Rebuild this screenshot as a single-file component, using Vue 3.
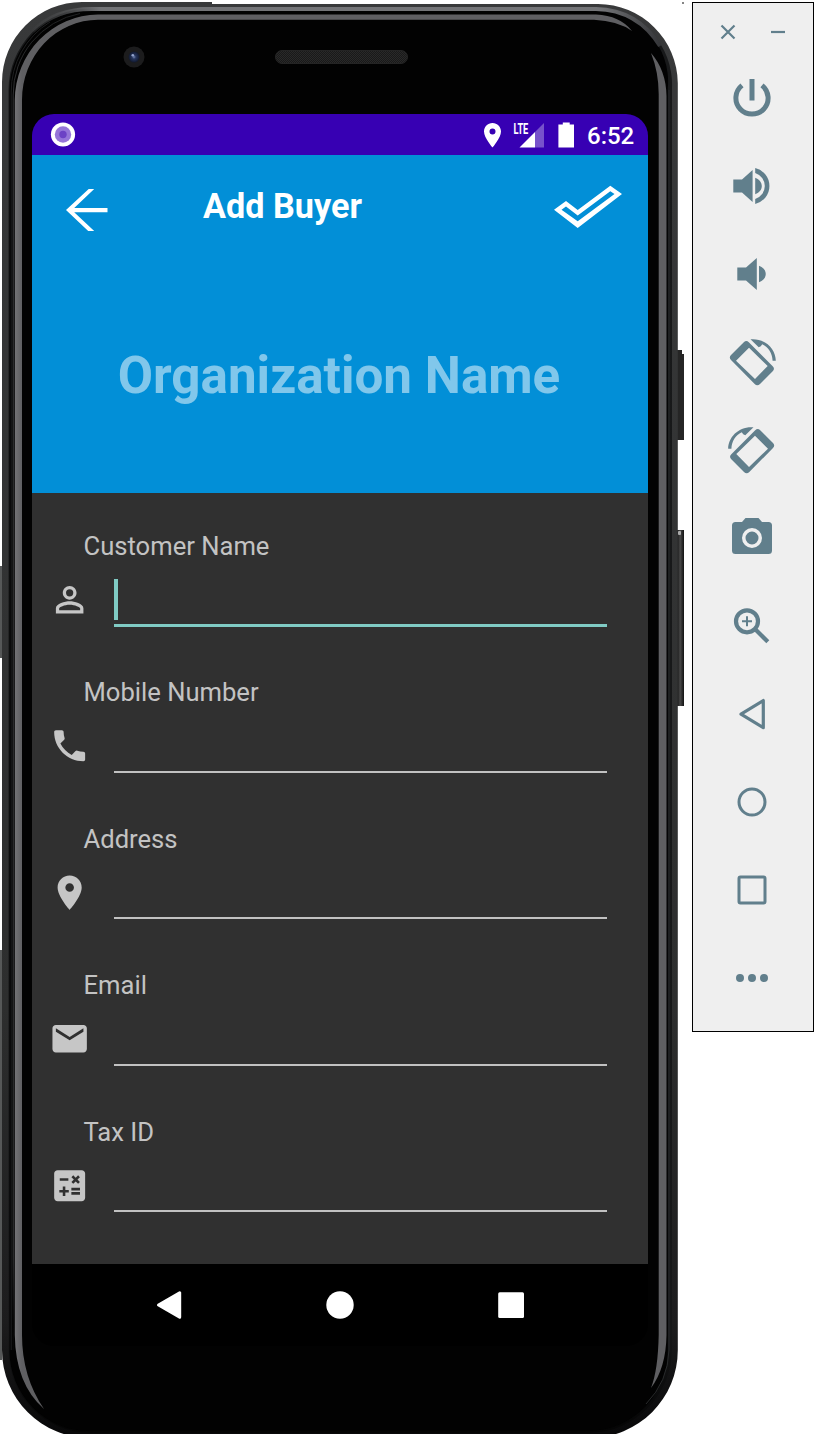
<script setup>
const fields = [
  { label: 'Customer Name', focused: true, icon: 'M12 5.9a2.1 2.1 0 1 1 0 4.2 2.1 2.1 0 0 1 0-4.2m0 9c2.97 0 6.1 1.46 6.1 2.1v1.1H5.9V17c0-.64 3.13-2.1 6.1-2.1M12 4C9.79 4 8 5.79 8 8s1.79 4 4 4 4-1.79 4-4-1.79-4-4-4zm0 9c-2.67 0-8 1.34-8 4v3h16v-3c0-2.66-5.33-4-8-4z' },
  { label: 'Mobile Number', icon: 'M6.62 10.79c1.44 2.83 3.76 5.14 6.59 6.59l2.2-2.2c.27-.27.67-.36 1.02-.24 1.12.37 2.33.57 3.57.57.55 0 1 .45 1 1V20c0 .55-.45 1-1 1-9.39 0-17-7.61-17-17 0-.55.45-1 1-1h3.5c.55 0 1 .45 1 1 0 1.25.2 2.45.57 3.57.11.35.03.74-.25 1.02l-2.2 2.2z' },
  { label: 'Address', icon: 'M12 2C8.13 2 5 5.13 5 9c0 5.25 7 13 7 13s7-7.75 7-13c0-3.87-3.13-7-7-7zm0 9.5a2.5 2.5 0 0 1 0-5 2.5 2.5 0 0 1 0 5z' },
  { label: 'Email', icon: 'M20 4H4c-1.1 0-1.99.9-1.99 2L2 18c0 1.1.9 2 2 2h16c1.1 0 2-.9 2-2V6c0-1.1-.9-2-2-2zm0 4l-8 5-8-5V6l8 5 8-5v2z' },
  { label: 'Tax ID', icon: 'M19 3H5c-1.1 0-2 .9-2 2v14c0 1.1.9 2 2 2h14c1.1 0 2-.9 2-2V5c0-1.1-.9-2-2-2zm-5.97 4.06L14.09 6l1.41 1.41L16.91 6l1.06 1.06-1.41 1.41 1.41 1.41-1.06 1.06-1.41-1.4-1.41 1.41-1.06-1.06 1.41-1.41-1.41-1.42zm-6.78.66h5v1.5h-5v-1.5zM11.5 16h-2v2H8v-2H6v-1.5h2v-2h1.5v2h2V16zm6.5 1.25h-5v-1.5h5v1.5zm0-2.5h-5v-1.5h5v1.5z' },
]
const rotate = 'M-8.2 -19.8Q-5.7 -22.3 -3.2 -19.8L20.7 4.3Q23.2 6.8 20.7 9.3L8 22Q5.3 24.6 2.7 22L-21 -2Q-23.4 -4.5 -21 -7ZM-3 -14.3L-16 -1.3L3 17L15.7 4ZM-1.5 -22.7C13 -24 23.8 -13 23.8 -1.2H20.6C20.3 -8.5 16.5 -15 10.2 -17.7L8.8 -15.8L6.7 -14.8Z'
const tools = [
  { name: 'Power', line: 'M-10 -12.6A16.1 16.1 0 1 0 10 -12.6M0 -19V2.5', width: 5 },
  { name: 'Volume up', fill: 'M-18.7 -6.6H-10L.6 -16V16L-10 6.4H-18.7ZM3.2 -8.3C12 -5 12 5 3.2 8.3ZM3.2 -18A18.5 18.5 0 0 1 3.2 18V13A13.6 13.6 0 0 0 3.2 -13Z' },
  { name: 'Volume down', fill: 'M-14.7 -6.6H-6L4.8 -16V16L-6 6.4H-14.7ZM7 -8.3C16 -5 16 5 7 8.3Z' },
  { name: 'Rotate left', fill: rotate },
  { name: 'Rotate right', fill: rotate, mirror: true },
  { name: 'Screenshot', fill: 'M-6.5 -20H6.5L10 -16H16.5Q20 -16 20 -12.5V12.5Q20 16 16.5 16H-16.5Q-20 16 -20 12.5V-12.5Q-20 -16 -16.5 -16H-10ZM0 -10A10 10 0 0 0 0 10A10 10 0 0 0 0 -10ZM0 -6.5A6.5 6.5 0 0 1 0 6.5A6.5 6.5 0 0 1 0 -6.5Z' },
  { name: 'Zoom', line: 'M-5 -15.7A11 11 0 1 1 -5 6.3A11 11 0 1 1 -5 -15.7M4 4L15.8 15.8', width: 4.2, thin: 'M-10 -4.7H0M-5 -9.7V.3' },
  { name: 'Back', line: 'M-11 .1L11.3 -13.5V13.7Z', width: 3.2 },
  { name: 'Home', line: 'M0 -13A13 13 0 0 1 0 13A13 13 0 0 1 0 -13Z', width: 3 },
  { name: 'Overview', line: 'M-11.6 -13H11.6Q13 -13 13 -11.6V11.6Q13 13 11.6 13H-11.6Q-13 13 -13 11.6V-11.6Q-13 -13 -11.6 -13Z', width: 3 },
  { name: 'More', fill: 'M-12 -4a4 4 0 0 1 0 8a4 4 0 0 1 0 -8M0 -4a4 4 0 0 1 0 8a4 4 0 0 1 0 -8M12 -4a4 4 0 0 1 0 8a4 4 0 0 1 0 -8' },
]
</script>

<template>
  <div class="emulator">
    <div class="phone">
      <svg class="shell" width="690" height="1434" viewBox="0 0 690 1434" aria-hidden="true">
        <defs>
          <linearGradient id="rim" gradientUnits="userSpaceOnUse" x1="14" x2="22" y1="0" y2="0"><stop offset="0" stop-color="#757578" /><stop offset="1" stop-color="#5f5f62" /></linearGradient>
          <linearGradient id="edge" x1="0" x2="0" y1="0" y2="1"><stop offset="0" stop-color="#38393a" /><stop offset=".7" stop-color="#2d2e2e" /><stop offset=".92" stop-color="#1c1c1d" /><stop offset="1" stop-color="#070708" /></linearGradient>
          <linearGradient id="inner" x1="0" x2="0" y1="0" y2="1"><stop offset="0" stop-color="#18191a" /><stop offset=".93" stop-color="#161718" /><stop offset="1" stop-color="#040404" /></linearGradient>
          <linearGradient id="topline" gradientUnits="userSpaceOnUse" x1="24" x2="665" y1="0" y2="0"><stop offset="0" stop-color="#454648" stop-opacity="0" /><stop offset=".12" stop-color="#737477" /><stop offset=".9" stop-color="#737477" /><stop offset="1" stop-color="#303134" /></linearGradient>
          <linearGradient id="groove" x1="0" x2="0" y1="0" y2="1"><stop offset="0" stop-color="#1f2021" /><stop offset=".1" stop-color="#3f4042" /><stop offset=".93" stop-color="#3a3b3d" /><stop offset=".98" stop-color="#0a0a0a" /></linearGradient>
          <linearGradient id="key" x1="0" x2="1"><stop offset="0" stop-color="#111" /><stop offset=".45" stop-color="#494949" /><stop offset="1" stop-color="#111" /></linearGradient>
          <radialGradient id="lens"><stop offset="0" stop-color="#7385b0" /><stop offset=".35" stop-color="#27365e" /><stop offset="1" stop-color="#10182d" /></radialGradient>
          <pattern id="mesh" width="2" height="2" patternUnits="userSpaceOnUse"><rect width="2" height="2" fill="#191919" /><path d="M0 0h1v1H0zM1 1h1v1H1z" fill="#292929" /></pattern>
        </defs>
        <path d="M0 566h2v92H0zM0 950h2v410H0z" fill="#565858" />
        <path d="M677 350h5v4h2v86h-7z" fill="#252525" /><rect x="677" y="530" width="7" height="176" fill="url(#key)" />
        <rect x="678" y="531" width="3" height="4" rx="1" fill="#aaa" />
        <path d="M82 2H212V4H598A80 80 0 0 1 677.8 83V1350A88 88 0 0 1 590 1438H90A88 88 0 0 1 2 1350V82A80 80 0 0 1 82 2Z" fill="url(#edge)" />
        <path d="M90 8.5H596A76 76 0 0 1 672 88V1350A84 84 0 0 1 590 1433H90A82 82 0 0 1 8.5 1350V90A81.5 81.5 0 0 1 90 8.5Z" fill="url(#inner)" />
        <path d="M90 10.5H596A71 71 0 0 1 667.8 88V1350A80 80 0 0 1 590 1431H90A80 80 0 0 1 9.5 1350V90A80 80 0 0 1 90 10.5Z" fill="#020202" />
        <path d="M33 31Q55 9 92 9H596Q638 10 660 46" fill="none" stroke="url(#topline)" stroke-width="4" />
        <path d="M13.2 1350V95A82 82 0 0 1 80 13.5" fill="none" stroke="url(#groove)" stroke-width="1" />
        <path d="M11.2 1350V92A82 82 0 0 1 50 22" fill="none" stroke="#1e1f20" stroke-width="1" />
        <path d="M669 90V1350A80 80 0 0 1 646 1404" fill="none" stroke="#292b2c" stroke-width="1" />
        <path d="M44 1409Q15.5 1384 14.8 1335V100A84 86 0 0 1 98 14.5H596Q620 15.5 632 31Q618 21 594 19.8H98A76 80 0 0 0 22 100V1335Q22 1377 44 1409Z" fill="url(#rim)" />
        <path d="M651 53Q666 70 666.5 96V1335Q666 1368 651 1388Q658 1370 658.7 1335V96Q659 73 651 53Z" fill="#5f5f62" />
        <circle cx="134" cy="57" r="10.5" fill="#1c1c1d" /><circle cx="134" cy="57" r="5.5" fill="url(#lens)" /><circle cx="132.8" cy="55.2" r="1.3" fill="#93a4cd" />
        <rect x="275.5" y="50.5" width="132" height="13" rx="6.5" fill="url(#mesh)" stroke="#242424" />
      </svg>
      <main class="screen">
        <div class="status">
          <svg width="26" height="26" viewBox="-13 -12.5 26 26"><circle r="12.1" fill="#fff" /><circle r="8.2" fill="#9575d8" /><circle r="3.7" fill="#6c42c5" /></svg>
          <div class="indicators">
            <svg width="90" height="30" viewBox="484 119.5 90 30" fill="#fff">
              <path fill-rule="evenodd" d="M492.5 122.5C487.6 122.5 484 126.2 484 131C484 137.3 492.5 147 492.5 147S501 137.3 501 131C501 126.2 497.4 122.5 492.5 122.5ZM492.5 128A3 3 0 1 1 492.5 134A3 3 0 1 1 492.5 128Z" />
              <g transform="translate(513.4 133) scale(.64 1)"><text class="lte">LTE</text></g>
              <path d="M535 131.5L544 122.5V147H535Z" opacity=".32" /><path d="M519.5 147L535 131.5V147Z" />
              <path d="M562.8 122H569.7V124H574.3V147H558.4V124H562.8Z" />
            </svg>
            <span class="time">6:52</span>
          </div>
        </div>
        <header class="hero">
          <div class="appbar">
            <svg width="42" height="44" viewBox="66 188 42 44" fill="#fff"><path d="M66 210L88.7 189H94.2L74.2 208H107.5V212.3H74.2L94.2 231H88.2Z" /></svg>
            <h1>Add Buyer</h1>
            <svg class="check" width="70" height="46" viewBox="553 184 70 46" fill="#fff"><path fill-rule="evenodd" d="M554 209.7L566 201L577.7 210L610.3 185.7L622 194L577.7 228ZM561.5 209.7L577.7 221.2L614.5 194L610.3 191.2L577.7 215.5L566 206.5Z" /></svg>
          </div>
          <div class="organization">Organization Name</div>
        </header>
        <form class="form">
          <div v-for="field in fields" :key="field.label" class="field" :class="{ focused: field.focused }">
            <label>{{ field.label }}</label>
            <div class="entry">
              <svg width="41.3" height="41.3" viewBox="0 0 24 24" fill="#c6c6c6"><path fill-rule="evenodd" :d="field.icon" /></svg>
              <div class="input"><span v-if="field.focused" class="caret"></span></div>
            </div>
          </div>
        </form>
        <nav class="nav">
          <svg width="28" height="30" viewBox="-14 -15 28 30"><path d="M-10.5 0L10.7 -12.3V12.3Z" fill="#fff" stroke="#fff" stroke-width="3" stroke-linejoin="round" /></svg>
          <svg width="28" height="28" viewBox="-14 -14 28 28"><circle r="13.7" fill="#fff" /></svg>
          <svg width="28" height="28" viewBox="-14 -14 28 28"><rect x="-12.8" y="-12.8" width="25.8" height="25.8" rx="1.5" fill="#fff" /></svg>
        </nav>
      </main>
    </div>
    <aside class="toolbar">
      <div class="window">
        <svg width="16" height="16" viewBox="-8 -8 16 16"><path d="M-6.5 -6.5L6.5 6.5M6.5 -6.5L-6.5 6.5" /></svg>
        <svg width="16" height="16" viewBox="-8 -8 16 16"><path d="M-7 0H7" /></svg>
      </div>
      <div v-for="tool in tools" :key="tool.name" class="tool">
        <svg width="52" height="52" viewBox="-26 -26 52 52" :class="{ mirror: tool.mirror }">
          <path v-if="tool.fill" :d="tool.fill" fill="#617f8c" fill-rule="evenodd" />
          <path v-if="tool.line" :d="tool.line" fill="none" stroke="#617f8c" :stroke-width="tool.width" stroke-linejoin="round" />
          <path v-if="tool.thin" :d="tool.thin" fill="none" stroke="#617f8c" stroke-width="2" />
        </svg>
      </div>
    </aside>
    <i class="speck"></i>
  </div>
</template>

<style>
body { background: #fff; overflow: hidden; }
</style>

<style scoped>
* { box-sizing: border-box; }
svg { display: block; flex: none; }
.emulator { position: relative; display: flex; align-items: flex-start; width: 814px; height: 1434px; overflow: hidden; font-family: Roboto, sans-serif; }
.phone { position: relative; width: 692px; height: 1434px; padding: 114px 0 0 32px; }
.shell { position: absolute; left: 0; top: 0; }
.screen { position: relative; width: 616px; height: 1232px; border-radius: 22px; overflow: hidden; background: #000; display: flex; flex-direction: column; }
.status { height: 41px; background: #3700b3; display: flex; align-items: center; justify-content: space-between; padding: 0 14px 0 18px; }
.indicators { display: flex; align-items: center; gap: 13px; }
.time { color: #fff; font-size: 24px; font-weight: 500; line-height: 28px; padding-top: 3px; width: 47px; white-space: nowrap; }
.lte { font: 700 14.5px Roboto, sans-serif; }
.hero { height: 338px; background: #028fd7; }
.appbar { height: 100px; padding: 0 25px 0 34px; display: flex; align-items: flex-start; }
.appbar > svg { margin-top: 33px; }
h1 { margin: 31px 0 0 95px; color: #fff; font-size: 34.2px; line-height: 40px; font-weight: 700; white-space: nowrap; }
.appbar > .check { margin: 29px 0 0 auto; }
.organization { text-align: center; margin-top: 89px; color: #81c7eb; font-size: 51.2px; line-height: 64px; font-weight: 700; white-space: nowrap; padding-right: 2px; }
.form { height: 771px; padding-top: 35.6px; background: #303030; }
.field { height: 146.55px; }
label { display: block; height: 34px; padding-left: 51.5px; color: #c3c3c3; font-size: 25.6px; line-height: 34px; white-space: nowrap; }
.entry { display: flex; align-items: flex-start; height: 66px; padding: 16.1px 41px 0 17px; gap: 23.7px; }
.input { flex: 1; height: 47.3px; border-bottom: 2px solid #c1c1c1; }
.focused .input { height: 48.2px; border-bottom: 3px solid #80cbc4; }
.caret { display: block; width: 4px; height: 41px; background: #80cbc4; }
.nav { height: 82px; padding: 0 123px; display: flex; align-items: center; justify-content: space-between; }
.toolbar { width: 122px; height: 1030px; margin-top: 2px; border: 1px solid #000; background: #efefef; }
.window { height: 51px; display: flex; justify-content: space-between; padding: 21px 27px 0; }
.window path { stroke: #617f8c; stroke-width: 2.2; }
.tool { height: 88px; display: flex; align-items: center; justify-content: center; }
.tool svg { margin-left: -2px; }
.mirror { transform: scaleX(-1); }
.speck { position: absolute; left: 682px; top: 2px; width: 2px; height: 2px; background: #858585; }
</style>
